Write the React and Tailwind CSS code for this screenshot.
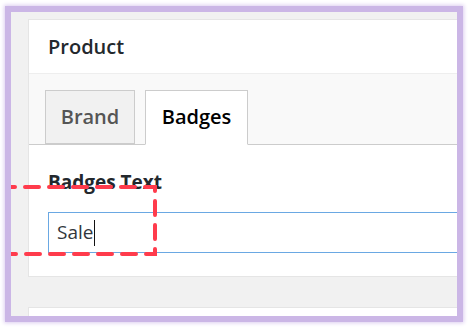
export default function App() {
  return (
    <div className="w-[468px] h-[328px] bg-white pt-[6px] pl-[5px]" style={{ fontFamily: '"Open Sans", "Noto Sans", sans-serif' }}>
      <div className="relative w-[458px] h-[316px] border-[6px] border-[#cbb6e6] shadow-[0_0_4px_1px_#dccdf0] bg-[#f1f1f1] overflow-hidden">
        <div className="pl-[17px] pt-[7px]">
          <div className="w-[520px] bg-white border border-[#e5e5e5]">
            <div className="h-[54px] flex items-center pl-[19px] text-[20px] font-semibold text-[#23282d] border-b border-[#eee]">
              Product
            </div>
            <div className="bg-[#f9f9f9] pt-[16px] pl-[16px] flex gap-[10px] border-b border-[#ccc] h-[71px]">
              <div className="h-[54px] w-[90px] flex items-center justify-center bg-[#f1f1f1] border border-[#ccc] text-[20px] font-semibold text-[#555]">
                Brand
              </div>
              <div className="h-[55px] w-[103px] flex items-center justify-center bg-white border border-[#ccc] border-b-white text-[20px] font-semibold text-black -mb-px pb-px">
                Badges
              </div>
            </div>
            <div className="pt-[24px] pb-[23px] pl-[19px]">
              <div className="text-[19px] leading-[26px] font-bold text-[#23282d]">Badges Text</div>
              <div className="mt-[17px] h-[41px] border border-[#6aa8e3] flex items-center pl-[8px] text-[19px] text-[#32373c]">
                Sale<span className="inline-block w-px h-[26px] bg-[#111] ml-px"></span>
              </div>
            </div>
          </div>
          <div className="h-[30px]"></div>
          <div className="w-[520px] h-[40px] bg-white border border-[#e5e5e5]"></div>
        </div>
        <svg className="absolute left-0 top-0" width="160" height="260">
          <path d="M -6 175 H 144 V 242 H -6" fill="none" stroke="#ff3b4c" strokeWidth="4" strokeLinecap="round" strokeDasharray="14 10" strokeDashoffset="4" />
        </svg>
      </div>
    </div>
  );
}
